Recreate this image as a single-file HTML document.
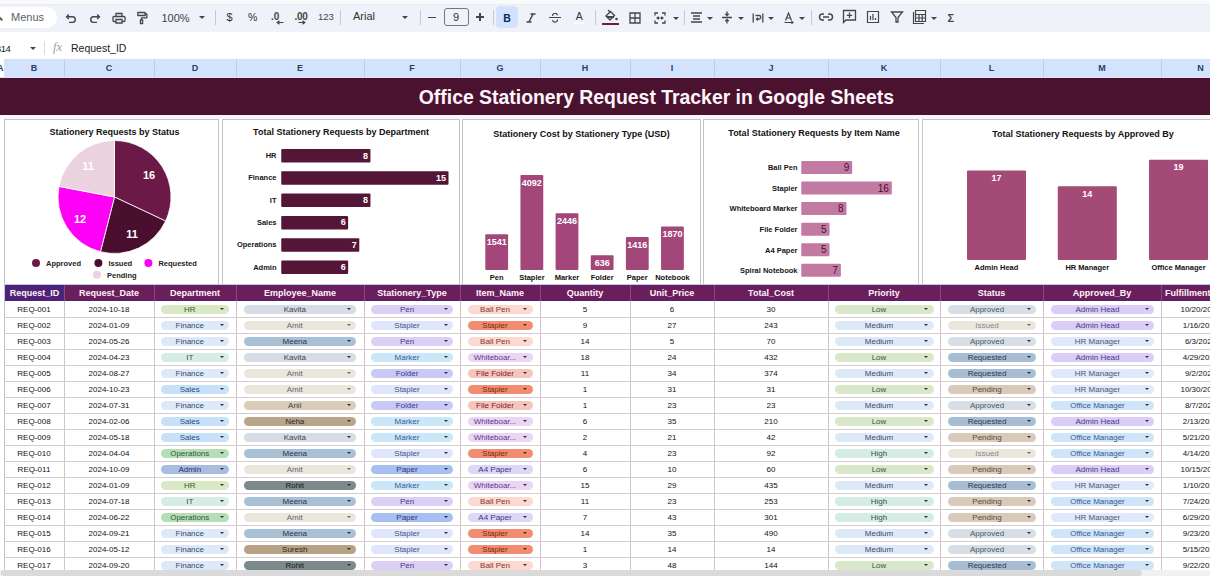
<!DOCTYPE html><html><head><meta charset="utf-8"><style>
*{margin:0;padding:0;box-sizing:border-box}
html,body{width:1210px;height:576px;overflow:hidden;background:#fff;font-family:"Liberation Sans", sans-serif;position:relative}
.ab{position:absolute}
.t{position:absolute;white-space:nowrap;line-height:1}
.chip{position:absolute;height:9.5px;border-radius:4.75px}
.ct{position:absolute;white-space:nowrap;font-size:8px;line-height:10px;text-align:center}
.arr{position:absolute;width:0;height:0;border-left:2.5px solid transparent;border-right:2.5px solid transparent;border-top:3px solid #333}
.arr2{position:absolute;width:0;height:0;border-left:2.2px solid transparent;border-right:2.2px solid transparent;border-top:2.6px solid #333}
</style></head><body>

<div class="ab" style="left:0;top:0;width:1210px;height:4px;background:#f8fafc"></div>
<div class="ab" style="left:0;top:4px;width:1210px;height:28px;background:#eff2f8"></div>
<div class="ab" style="left:0;top:4px;width:1210px;height:1px;background:#e9ecf1"></div>
<div class="ab" style="left:-20px;top:7px;width:77px;height:21px;border-radius:11px;background:#fff"></div>
<div class="t" style="left:11px;top:12px;font-size:11px;color:#5a5d62">Menus</div>
<div class="ab" style="left:-1px;top:18px;width:4px;height:1.5px;background:#555;transform:rotate(45deg)"></div>
<svg class="ab" style="left:65px;top:13px" width="12" height="11" viewBox="0 0 12 11" ><path d="M3.8 1.5 L1.6 3.8 L3.8 6 M1.8 3.8 H7.5 a2.8 2.8 0 0 1 0 5.6 H4" fill="none" stroke="#444746" stroke-width="1.4"/></svg>
<svg class="ab" style="left:89px;top:13px" width="12" height="11" viewBox="0 0 12 11" ><path d="M8.2 1.5 L10.4 3.8 L8.2 6 M10.2 3.8 H4.5 a2.8 2.8 0 0 0 0 5.6 H8" fill="none" stroke="#444746" stroke-width="1.4"/></svg>
<svg class="ab" style="left:112px;top:12px" width="14" height="12" viewBox="0 0 14 12" ><path d="M4 4.5 V1.5 H10 V4.5 M3.5 9.5 H2 a1 1 0 0 1 -1 -1 V5.5 a1 1 0 0 1 1 -1 H12 a1 1 0 0 1 1 1 V8.5 a1 1 0 0 1 -1 1 H10.5 M4 7.5 H10 V11 H4 Z" fill="none" stroke="#444746" stroke-width="1.3"/></svg>
<svg class="ab" style="left:136px;top:11px" width="13" height="14" viewBox="0 0 13 14" ><path d="M1.8 1.5 H9 V4.5 H1.8 Z M9 3 H10.8 V6.8 H5.5 V9 M4.4 9 H6.6 V12.5 H4.4 Z" fill="none" stroke="#444746" stroke-width="1.3" stroke-linejoin="round"/></svg>
<div class="t" style="left:161.5px;top:12.5px;font-size:11px;color:#444">100%</div>
<div class="arr" style="left:199px;top:15.5px;border-top-color:#444746;border-left-width:3px;border-right-width:3px;border-top-width:3.5px"></div>
<div class="ab" style="left:215px;top:10px;width:1px;height:15px;background:#c7c9cc"></div>
<div class="ab" style="left:340px;top:10px;width:1px;height:15px;background:#c7c9cc"></div>
<div class="ab" style="left:420px;top:10px;width:1px;height:15px;background:#c7c9cc"></div>
<div class="ab" style="left:493px;top:10px;width:1px;height:15px;background:#c7c9cc"></div>
<div class="ab" style="left:595px;top:10px;width:1px;height:15px;background:#c7c9cc"></div>
<div class="ab" style="left:684px;top:10px;width:1px;height:15px;background:#c7c9cc"></div>
<div class="ab" style="left:811px;top:10px;width:1px;height:15px;background:#c7c9cc"></div>
<div class="t" style="left:226.5px;top:11.5px;font-size:11px;color:#333">$</div>
<div class="t" style="left:248px;top:12px;font-size:10.5px;color:#333">%</div>
<div class="t" style="left:271px;top:11.5px;font-size:10px;color:#444746;font-weight:bold">.0</div>
<svg class="ab" style="left:276px;top:20px" width="8" height="5" viewBox="0 0 8 5" ><path d="M7.5 2.5 H1.5 M3.5 0.8 L1.2 2.5 L3.5 4.2" fill="none" stroke="#444746" stroke-width="1.2"/></svg>
<div class="t" style="left:294.5px;top:11.5px;font-size:10px;color:#444746;font-weight:bold;letter-spacing:-0.3px">.00</div>
<svg class="ab" style="left:298px;top:20px" width="8" height="5" viewBox="0 0 8 5" ><path d="M0.5 2.5 H6.5 M4.5 0.8 L6.8 2.5 L4.5 4.2" fill="none" stroke="#444746" stroke-width="1.2"/></svg>
<div class="t" style="left:318px;top:12px;font-size:9.5px;color:#444746">123</div>
<div class="t" style="left:353px;top:11px;font-size:11px;color:#333">Arial</div>
<div class="arr" style="left:402px;top:15.5px;border-top-color:#444746;border-left-width:3px;border-right-width:3px;border-top-width:3.5px"></div>
<div class="ab" style="left:428px;top:17px;width:8px;height:1.4px;background:#444746"></div>
<div class="ab" style="left:444px;top:8px;width:25px;height:18px;border:1px solid #747775;border-radius:3px"></div>
<div class="t" style="left:453px;top:12px;font-size:11px;color:#333">9</div>
<div class="ab" style="left:476px;top:16.3px;width:8px;height:1.4px;background:#444746"></div>
<div class="ab" style="left:479.3px;top:13px;width:1.4px;height:8px;background:#444746"></div>
<div class="ab" style="left:496px;top:6px;width:22px;height:22px;border-radius:4px;background:#d3e3fd"></div>
<div class="t" style="left:503.3px;top:13.2px;font-size:10.5px;color:#0b2a5a;font-weight:bold">B</div>
<svg class="ab" style="left:525px;top:13px" width="12" height="10" viewBox="0 0 12 10" ><path d="M5.5 1 H10.5 M1.5 9 H6.5 M8 1 L4 9" fill="none" stroke="#444746" stroke-width="1.5"/></svg>
<svg class="ab" style="left:549px;top:13px" width="12" height="10" viewBox="0 0 12 10" ><path d="M0 4.5 H12 M3.5 3 a2.5 2.2 0 0 1 5 -0.6 M8.5 6.4 a2.5 2.4 0 0 1 -5 0.6" fill="none" stroke="#444746" stroke-width="1.2"/></svg>
<div class="t" style="left:575.8px;top:11px;font-size:10.5px;color:#333">A</div>
<div class="ab" style="left:574px;top:22px;width:11px;height:1.5px;background:#fafbfd"></div>
<svg class="ab" style="left:602px;top:8px" width="18" height="17" viewBox="0 0 18 17" ><path d="M4 8 L8.5 3.5 L12.5 7.5 L8 12 Z" fill="none" stroke="#444746" stroke-width="1.4"/><path d="M5 9 H12" stroke="#444746" stroke-width="2"/><circle cx="14.5" cy="11" r="1.3" fill="#444746"/><path d="M6 2 L8.5 4.5" stroke="#444746" stroke-width="1.3"/></svg>
<div class="ab" style="left:602px;top:22.5px;width:17px;height:2px;background:#6a1e44"></div>
<svg class="ab" style="left:629px;top:12px" width="12" height="12" viewBox="0 0 12 12" ><path d="M1 1 H11 V11 H1 Z M6 1 V11 M1 6 H11" fill="none" stroke="#444746" stroke-width="1.3"/></svg>
<svg class="ab" style="left:654px;top:12px" width="12" height="12" viewBox="0 0 12 12" ><path d="M1 3.5 V1 H4 M1 8.5 V11 H4 M11 3.5 V1 H8 M11 8.5 V11 H8 M2.5 6 H5 M3.8 4.6 L5 6 L3.8 7.4 M9.5 6 H7 M8.2 4.6 L7 6 L8.2 7.4" fill="none" stroke="#444746" stroke-width="1.3"/></svg>
<div class="arr" style="left:672.5px;top:16.5px;border-top-color:#444746;border-left-width:3px;border-right-width:3px;border-top-width:3.5px"></div>
<svg class="ab" style="left:690px;top:11px" width="14" height="13" viewBox="0 0 14 13" ><path d="M1 2 H12 M3 5 H10 M3 8 H10 M1 11 H12" fill="none" stroke="#444746" stroke-width="1.4"/></svg>
<div class="arr" style="left:707px;top:16.5px;border-top-color:#444746;border-left-width:3px;border-right-width:3px;border-top-width:3.5px"></div>
<svg class="ab" style="left:721px;top:11px" width="12" height="13" viewBox="0 0 12 13" ><path d="M1 6.5 H11 M6 0.5 V4.5 M4.3 2.8 L6 4.5 L7.7 2.8 M6 12.5 V8.5 M4.3 10.2 L6 8.5 L7.7 10.2" fill="none" stroke="#444746" stroke-width="1.3"/></svg>
<div class="arr" style="left:737.5px;top:16.5px;border-top-color:#444746;border-left-width:3px;border-right-width:3px;border-top-width:3.5px"></div>
<svg class="ab" style="left:752px;top:12px" width="12" height="12" viewBox="0 0 12 12" ><path d="M1.2 1.5 V10.5 M10.8 1.5 V10.5 M3.5 3.5 H7 a1.8 1.8 0 0 1 0 3.6 H4.8 M6 5.8 L4.5 7.1 L6 8.4" fill="none" stroke="#444746" stroke-width="1.3"/></svg>
<div class="arr" style="left:768px;top:16.5px;border-top-color:#444746;border-left-width:3px;border-right-width:3px;border-top-width:3.5px"></div>
<svg class="ab" style="left:783px;top:12px" width="13" height="12" viewBox="0 0 13 12" ><path d="M2.5 8.5 L5.5 1 L8.5 8.5 M3.6 6 H7.4 M1.5 10.5 H10 M8.5 9.2 L10 10.5 L8.5 11.8" fill="none" stroke="#444746" stroke-width="1.2"/></svg>
<div class="arr" style="left:799px;top:16.5px;border-top-color:#444746;border-left-width:3px;border-right-width:3px;border-top-width:3.5px"></div>
<svg class="ab" style="left:818px;top:11px" width="16" height="12" viewBox="0 0 16 12" ><path d="M6 3 H4.5 a3 3 0 0 0 0 6 H6 M10 3 H11.5 a3 3 0 0 1 0 6 H10 M5 6 H11" fill="none" stroke="#444746" stroke-width="1.4"/></svg>
<svg class="ab" style="left:842px;top:9px" width="15" height="15" viewBox="0 0 15 15" ><path d="M1.5 1.5 H13.5 V11 H4 L1.5 13.5 Z M7.5 3.5 V9 M4.8 6.3 H10.2" fill="none" stroke="#444746" stroke-width="1.3"/></svg>
<svg class="ab" style="left:866px;top:10px" width="14" height="14" viewBox="0 0 14 14" ><path d="M1.5 1.5 H12.5 V12.5 H1.5 Z M4.5 6 V10 M7 4 V10 M9.5 8 V10" fill="none" stroke="#444746" stroke-width="1.2"/></svg>
<svg class="ab" style="left:890px;top:10px" width="14" height="14" viewBox="0 0 14 14" ><path d="M1.5 2 H12.5 L8 7.5 V12 H6 V7.5 Z" fill="none" stroke="#444746" stroke-width="1.3"/></svg>
<svg class="ab" style="left:912px;top:9px" width="15" height="16" viewBox="0 0 15 16" ><path d="M1.5 3 V14.5 H12 M3.5 1.5 H13.5 V12.5 H3.5 Z M3.5 5.5 H13.5 M3.5 9 H13.5 M7 5.5 V12.5 M10.2 5.5 V12.5" fill="none" stroke="#444746" stroke-width="1.2"/></svg>
<div class="arr" style="left:930.5px;top:16.5px;border-top-color:#444746;border-left-width:3px;border-right-width:3px;border-top-width:3.5px"></div>
<div class="t" style="left:947.5px;top:12.5px;font-size:11px;color:#444746;font-weight:bold">&#931;</div>
<div class="ab" style="left:0;top:32px;width:1210px;height:27px;background:#fff"></div>
<div class="t" style="left:-5px;top:44px;font-size:9.5px;letter-spacing:-0.6px;color:#222">B14</div>
<div class="arr" style="left:30px;top:47px;border-top-color:#444746;border-left-width:3px;border-right-width:3px;border-top-width:3.5px"></div>
<div class="ab" style="left:44px;top:41px;width:1px;height:14px;background:#dadce0"></div>
<div class="t" style="left:53px;top:41px;font-size:12.5px;color:#9aa0a6;font-style:italic;font-family:'Liberation Serif',serif">fx</div>
<div class="t" style="left:71px;top:42.5px;font-size:10.5px;color:#222">Request_ID</div>
<div class="ab" style="left:0;top:59px;width:1210px;height:19px;background:#d3e3fd"></div>
<div class="ab" style="left:0;top:59px;width:4px;height:19px;background:#fff"></div>
<div class="t" style="left:-3px;top:64px;font-size:9px;font-weight:bold;color:#1f3b63">A</div>
<div class="ab" style="left:64px;top:59px;width:1px;height:19px;background:#c0cbe0"></div>
<div class="t" style="left:14.0px;width:40px;text-align:center;top:64px;font-size:9px;font-weight:bold;color:#2a3f5e">B</div>
<div class="ab" style="left:154px;top:59px;width:1px;height:19px;background:#c0cbe0"></div>
<div class="t" style="left:89.0px;width:40px;text-align:center;top:64px;font-size:9px;font-weight:bold;color:#2a3f5e">C</div>
<div class="ab" style="left:236px;top:59px;width:1px;height:19px;background:#c0cbe0"></div>
<div class="t" style="left:175.0px;width:40px;text-align:center;top:64px;font-size:9px;font-weight:bold;color:#2a3f5e">D</div>
<div class="ab" style="left:364px;top:59px;width:1px;height:19px;background:#c0cbe0"></div>
<div class="t" style="left:280.0px;width:40px;text-align:center;top:64px;font-size:9px;font-weight:bold;color:#2a3f5e">E</div>
<div class="ab" style="left:460px;top:59px;width:1px;height:19px;background:#c0cbe0"></div>
<div class="t" style="left:392.0px;width:40px;text-align:center;top:64px;font-size:9px;font-weight:bold;color:#2a3f5e">F</div>
<div class="ab" style="left:540px;top:59px;width:1px;height:19px;background:#c0cbe0"></div>
<div class="t" style="left:480.0px;width:40px;text-align:center;top:64px;font-size:9px;font-weight:bold;color:#2a3f5e">G</div>
<div class="ab" style="left:630px;top:59px;width:1px;height:19px;background:#c0cbe0"></div>
<div class="t" style="left:565.0px;width:40px;text-align:center;top:64px;font-size:9px;font-weight:bold;color:#2a3f5e">H</div>
<div class="ab" style="left:714px;top:59px;width:1px;height:19px;background:#c0cbe0"></div>
<div class="t" style="left:652.0px;width:40px;text-align:center;top:64px;font-size:9px;font-weight:bold;color:#2a3f5e">I</div>
<div class="ab" style="left:828px;top:59px;width:1px;height:19px;background:#c0cbe0"></div>
<div class="t" style="left:751.0px;width:40px;text-align:center;top:64px;font-size:9px;font-weight:bold;color:#2a3f5e">J</div>
<div class="ab" style="left:940px;top:59px;width:1px;height:19px;background:#c0cbe0"></div>
<div class="t" style="left:864.0px;width:40px;text-align:center;top:64px;font-size:9px;font-weight:bold;color:#2a3f5e">K</div>
<div class="ab" style="left:1043px;top:59px;width:1px;height:19px;background:#c0cbe0"></div>
<div class="t" style="left:971.5px;width:40px;text-align:center;top:64px;font-size:9px;font-weight:bold;color:#2a3f5e">L</div>
<div class="ab" style="left:1161px;top:59px;width:1px;height:19px;background:#c0cbe0"></div>
<div class="t" style="left:1082.0px;width:40px;text-align:center;top:64px;font-size:9px;font-weight:bold;color:#2a3f5e">M</div>
<div class="ab" style="left:1240px;top:59px;width:1px;height:19px;background:#c0cbe0"></div>
<div class="t" style="left:1180.5px;width:40px;text-align:center;top:64px;font-size:9px;font-weight:bold;color:#2a3f5e">N</div>
<div class="ab" style="left:0;top:77px;width:1210px;height:1px;background:#e8e0ee"></div>
<div class="ab" style="left:0;top:78px;width:1210px;height:37px;background:#4b1230"></div>
<div class="ab" style="left:0;top:115px;width:1210px;height:4px;background:#fdf5fa"></div>
<div class="t" style="left:356.4px;width:600px;text-align:center;top:88px;font-size:19.4px;font-weight:bold;color:#fff6fb">Office Stationery Request Tracker in Google Sheets</div>
<div class="ab" style="left:0;top:119px;width:1210px;height:166px;background:#fff"></div>
<div class="ab" style="left:4.0px;top:119px;width:215.0px;height:170px;border:1px solid #c4c4c4"></div>
<div class="ab" style="left:222.0px;top:119px;width:238.0px;height:170px;border:1px solid #c4c4c4"></div>
<div class="ab" style="left:462.0px;top:119px;width:239.0px;height:170px;border:1px solid #c4c4c4"></div>
<div class="ab" style="left:703.0px;top:119px;width:216.0px;height:170px;border:1px solid #c4c4c4"></div>
<div class="ab" style="left:922.0px;top:119px;width:338.5px;height:170px;border:1px solid #c4c4c4"></div>
<svg class="ab" style="left:0;top:0" width="1210" height="576" viewBox="0 0 1210 576" font-family='"Liberation Sans", sans-serif'><text x="114.5" y="134.5" font-size="9" font-weight="bold" fill="#111" text-anchor="middle">Stationery Requests by Status</text><path d="M114.5 197 L114.50 140.50 A56.5 56.5 0 0 1 165.62 221.06 Z" fill="#6b1a48" stroke="#fff" stroke-width="0.8"/><path d="M114.5 197 L165.62 221.06 A56.5 56.5 0 0 1 100.45 251.72 Z" fill="#4a0f2e" stroke="#fff" stroke-width="0.8"/><path d="M114.5 197 L100.45 251.72 A56.5 56.5 0 0 1 59.00 186.41 Z" fill="#ff00f6" stroke="#fff" stroke-width="0.8"/><path d="M114.5 197 L59.00 186.41 A56.5 56.5 0 0 1 114.50 140.50 Z" fill="#ead2de" stroke="#fff" stroke-width="0.8"/><text x="149" y="179" font-size="11" font-weight="bold" fill="#fff" text-anchor="middle">16</text><text x="132" y="238" font-size="11" font-weight="bold" fill="#fff" text-anchor="middle">11</text><text x="80" y="223" font-size="11" font-weight="bold" fill="#fff" text-anchor="middle">12</text><text x="88" y="169.5" font-size="11" font-weight="bold" fill="#fff" text-anchor="middle">11</text><circle cx="36" cy="263" r="4" fill="#6b1a48"/><text x="46" y="265.8" font-size="7.5" font-weight="bold" fill="#222" text-anchor="start">Approved</text><circle cx="98.4" cy="263" r="4" fill="#4a0f2e"/><text x="108.4" y="265.8" font-size="7.5" font-weight="bold" fill="#222" text-anchor="start">Issued</text><circle cx="148.4" cy="263" r="4" fill="#ff00f6"/><text x="158.4" y="265.8" font-size="7.5" font-weight="bold" fill="#222" text-anchor="start">Requested</text><circle cx="97" cy="274.7" r="4" fill="#ead2de"/><text x="107" y="277.5" font-size="7.5" font-weight="bold" fill="#222" text-anchor="start">Pending</text><text x="341" y="135" font-size="9" font-weight="bold" fill="#111" text-anchor="middle">Total Stationery Requests by Department</text><rect x="281.25" y="149.00" width="89.20" height="13.5" rx="1" fill="#541636"/><text x="276.5" y="158.0" font-size="7.5" font-weight="bold" fill="#151515" text-anchor="end">HR</text><text x="367.95" y="158.5" font-size="9" font-weight="bold" fill="#fff" text-anchor="end">8</text><rect x="281.25" y="171.30" width="167.25" height="13.5" rx="1" fill="#541636"/><text x="276.5" y="180.3" font-size="7.5" font-weight="bold" fill="#151515" text-anchor="end">Finance</text><text x="446.0" y="180.8" font-size="9" font-weight="bold" fill="#fff" text-anchor="end">15</text><rect x="281.25" y="193.60" width="89.20" height="13.5" rx="1" fill="#541636"/><text x="276.5" y="202.6" font-size="7.5" font-weight="bold" fill="#151515" text-anchor="end">IT</text><text x="367.95" y="203.1" font-size="9" font-weight="bold" fill="#fff" text-anchor="end">8</text><rect x="281.25" y="215.90" width="66.90" height="13.5" rx="1" fill="#541636"/><text x="276.5" y="224.9" font-size="7.5" font-weight="bold" fill="#151515" text-anchor="end">Sales</text><text x="345.65" y="225.4" font-size="9" font-weight="bold" fill="#fff" text-anchor="end">6</text><rect x="281.25" y="238.20" width="78.05" height="13.5" rx="1" fill="#541636"/><text x="276.5" y="247.2" font-size="7.5" font-weight="bold" fill="#151515" text-anchor="end">Operations</text><text x="356.8" y="247.7" font-size="9" font-weight="bold" fill="#fff" text-anchor="end">7</text><rect x="281.25" y="260.50" width="66.90" height="13.5" rx="1" fill="#541636"/><text x="276.5" y="269.5" font-size="7.5" font-weight="bold" fill="#151515" text-anchor="end">Admin</text><text x="345.65" y="270.0" font-size="9" font-weight="bold" fill="#fff" text-anchor="end">6</text><text x="581.5" y="136.5" font-size="9" font-weight="bold" fill="#111" text-anchor="middle">Stationery Cost by Stationery Type (USD)</text><rect x="485.30" y="234.22" width="22.8" height="35.78" rx="1" fill="#a3477a"/><text x="496.7" y="244.81798" font-size="9" font-weight="bold" fill="#fff" text-anchor="middle">1541</text><text x="496.7" y="280" font-size="7.5" font-weight="bold" fill="#111" text-anchor="middle">Pen</text><rect x="520.45" y="174.98" width="22.8" height="95.02" rx="1" fill="#a3477a"/><text x="531.85" y="185.58375999999998" font-size="9" font-weight="bold" fill="#fff" text-anchor="middle">4092</text><text x="531.85" y="280" font-size="7.5" font-weight="bold" fill="#111" text-anchor="middle">Stapler</text><rect x="555.60" y="213.20" width="22.8" height="56.80" rx="1" fill="#a3477a"/><text x="567.0" y="223.80388" font-size="9" font-weight="bold" fill="#fff" text-anchor="middle">2446</text><text x="567.0" y="280" font-size="7.5" font-weight="bold" fill="#111" text-anchor="middle">Marker</text><rect x="590.75" y="255.23" width="22.8" height="14.77" rx="1" fill="#a3477a"/><text x="602.15" y="265.83208" font-size="9" font-weight="bold" fill="#fff" text-anchor="middle">636</text><text x="602.15" y="280" font-size="7.5" font-weight="bold" fill="#111" text-anchor="middle">Folder</text><rect x="625.90" y="237.12" width="22.8" height="32.88" rx="1" fill="#a3477a"/><text x="637.3" y="247.72047999999998" font-size="9" font-weight="bold" fill="#fff" text-anchor="middle">1416</text><text x="637.3" y="280" font-size="7.5" font-weight="bold" fill="#111" text-anchor="middle">Paper</text><rect x="661.05" y="226.58" width="22.8" height="43.42" rx="1" fill="#a3477a"/><text x="672.4499999999999" y="237.1786" font-size="9" font-weight="bold" fill="#fff" text-anchor="middle">1870</text><text x="672.4499999999999" y="280" font-size="7.5" font-weight="bold" fill="#111" text-anchor="middle">Notebook</text><text x="814" y="135.5" font-size="9" font-weight="bold" fill="#111" text-anchor="middle">Total Stationery Requests by Item Name</text><rect x="801.25" y="161.00" width="50.94" height="13" rx="1" fill="#c27aa2"/><text x="797.5" y="170.3" font-size="7.5" font-weight="bold" fill="#151515" text-anchor="end">Ball Pen</text><text x="849.19" y="171.0" font-size="10" font-weight="normal" fill="#4a0f2e" text-anchor="end">9</text><rect x="801.25" y="181.55" width="90.56" height="13" rx="1" fill="#c27aa2"/><text x="797.5" y="190.85000000000002" font-size="7.5" font-weight="bold" fill="#151515" text-anchor="end">Stapler</text><text x="888.81" y="191.55" font-size="10" font-weight="normal" fill="#4a0f2e" text-anchor="end">16</text><rect x="801.25" y="202.10" width="45.28" height="13" rx="1" fill="#c27aa2"/><text x="797.5" y="211.4" font-size="7.5" font-weight="bold" fill="#151515" text-anchor="end">Whiteboard Marker</text><text x="843.53" y="212.1" font-size="10" font-weight="normal" fill="#4a0f2e" text-anchor="end">8</text><rect x="801.25" y="222.65" width="28.30" height="13" rx="1" fill="#c27aa2"/><text x="797.5" y="231.95000000000002" font-size="7.5" font-weight="bold" fill="#151515" text-anchor="end">File Folder</text><text x="826.55" y="232.65" font-size="10" font-weight="normal" fill="#4a0f2e" text-anchor="end">5</text><rect x="801.25" y="243.20" width="28.30" height="13" rx="1" fill="#c27aa2"/><text x="797.5" y="252.5" font-size="7.5" font-weight="bold" fill="#151515" text-anchor="end">A4 Paper</text><text x="826.55" y="253.2" font-size="10" font-weight="normal" fill="#4a0f2e" text-anchor="end">5</text><rect x="801.25" y="263.75" width="39.62" height="13" rx="1" fill="#c27aa2"/><text x="797.5" y="273.05" font-size="7.5" font-weight="bold" fill="#151515" text-anchor="end">Spiral Notebook</text><text x="837.87" y="273.75" font-size="10" font-weight="normal" fill="#4a0f2e" text-anchor="end">7</text><text x="1083" y="136.5" font-size="9" font-weight="bold" fill="#111" text-anchor="middle">Total Stationery Requests by Approved By</text><rect x="967" y="170.41" width="59" height="89.59" rx="1" fill="#a34a76"/><text x="996.5" y="181.01000000000002" font-size="9" font-weight="bold" fill="#fff" text-anchor="middle">17</text><text x="996.5" y="270" font-size="7.5" font-weight="bold" fill="#111" text-anchor="middle">Admin Head</text><rect x="1057.8" y="186.22" width="59" height="73.78" rx="1" fill="#a34a76"/><text x="1087.3" y="196.82" font-size="9" font-weight="bold" fill="#fff" text-anchor="middle">14</text><text x="1087.3" y="270" font-size="7.5" font-weight="bold" fill="#111" text-anchor="middle">HR Manager</text><rect x="1149" y="159.87" width="59" height="100.13" rx="1" fill="#a34a76"/><text x="1178.5" y="170.47" font-size="9" font-weight="bold" fill="#fff" text-anchor="middle">19</text><text x="1178.5" y="270" font-size="7.5" font-weight="bold" fill="#111" text-anchor="middle">Office Manager</text></svg>
<div class="ab" style="left:0;top:285px;width:1210px;height:291px;background:#fff"></div>
<div class="ab" style="left:4px;top:285px;width:1206px;height:16px;background:#6b1e5c"></div>
<div class="ab" style="left:4px;top:284px;width:1206px;height:1px;background:#b4caf2"></div>
<div class="ab" style="left:4px;top:300px;width:1206px;height:1px;background:#4a2372"></div>
<div class="t" style="left:-26.0px;width:120px;text-align:center;top:288.5px;font-size:9px;font-weight:bold;color:#fff3fb">Request_ID</div>
<div class="ab" style="left:64px;top:285px;width:1px;height:16px;background:#8a4a7c"></div>
<div class="t" style="left:49.0px;width:120px;text-align:center;top:288.5px;font-size:9px;font-weight:bold;color:#fff3fb">Request_Date</div>
<div class="ab" style="left:154px;top:285px;width:1px;height:16px;background:#8a4a7c"></div>
<div class="t" style="left:135.0px;width:120px;text-align:center;top:288.5px;font-size:9px;font-weight:bold;color:#fff3fb">Department</div>
<div class="ab" style="left:236px;top:285px;width:1px;height:16px;background:#8a4a7c"></div>
<div class="t" style="left:240.0px;width:120px;text-align:center;top:288.5px;font-size:9px;font-weight:bold;color:#fff3fb">Employee_Name</div>
<div class="ab" style="left:364px;top:285px;width:1px;height:16px;background:#8a4a7c"></div>
<div class="t" style="left:352.0px;width:120px;text-align:center;top:288.5px;font-size:9px;font-weight:bold;color:#fff3fb">Stationery_Type</div>
<div class="ab" style="left:460px;top:285px;width:1px;height:16px;background:#8a4a7c"></div>
<div class="t" style="left:440.0px;width:120px;text-align:center;top:288.5px;font-size:9px;font-weight:bold;color:#fff3fb">Item_Name</div>
<div class="ab" style="left:540px;top:285px;width:1px;height:16px;background:#8a4a7c"></div>
<div class="t" style="left:525.0px;width:120px;text-align:center;top:288.5px;font-size:9px;font-weight:bold;color:#fff3fb">Quantity</div>
<div class="ab" style="left:630px;top:285px;width:1px;height:16px;background:#8a4a7c"></div>
<div class="t" style="left:612.0px;width:120px;text-align:center;top:288.5px;font-size:9px;font-weight:bold;color:#fff3fb">Unit_Price</div>
<div class="ab" style="left:714px;top:285px;width:1px;height:16px;background:#8a4a7c"></div>
<div class="t" style="left:711.0px;width:120px;text-align:center;top:288.5px;font-size:9px;font-weight:bold;color:#fff3fb">Total_Cost</div>
<div class="ab" style="left:828px;top:285px;width:1px;height:16px;background:#8a4a7c"></div>
<div class="t" style="left:824.0px;width:120px;text-align:center;top:288.5px;font-size:9px;font-weight:bold;color:#fff3fb">Priority</div>
<div class="ab" style="left:940px;top:285px;width:1px;height:16px;background:#8a4a7c"></div>
<div class="t" style="left:931.5px;width:120px;text-align:center;top:288.5px;font-size:9px;font-weight:bold;color:#fff3fb">Status</div>
<div class="ab" style="left:1043px;top:285px;width:1px;height:16px;background:#8a4a7c"></div>
<div class="t" style="left:1042.0px;width:120px;text-align:center;top:288.5px;font-size:9px;font-weight:bold;color:#fff3fb">Approved_By</div>
<div class="ab" style="left:1161px;top:285px;width:1px;height:16px;background:#8a4a7c"></div>
<div class="t" style="left:1165px;top:288.5px;font-size:9px;font-weight:bold;color:#fff3fb">Fulfillment_Date</div>
<div class="ab" style="left:1240px;top:285px;width:1px;height:16px;background:#8a4a7c"></div>
<div class="ab" style="left:4px;top:317px;width:1206px;height:1px;background:#d3cdd2"></div>
<div class="ab" style="left:4px;top:333px;width:1206px;height:1px;background:#d3cdd2"></div>
<div class="ab" style="left:4px;top:349px;width:1206px;height:1px;background:#d3cdd2"></div>
<div class="ab" style="left:4px;top:365px;width:1206px;height:1px;background:#d3cdd2"></div>
<div class="ab" style="left:4px;top:381px;width:1206px;height:1px;background:#d3cdd2"></div>
<div class="ab" style="left:4px;top:397px;width:1206px;height:1px;background:#d3cdd2"></div>
<div class="ab" style="left:4px;top:413px;width:1206px;height:1px;background:#d3cdd2"></div>
<div class="ab" style="left:4px;top:429px;width:1206px;height:1px;background:#d3cdd2"></div>
<div class="ab" style="left:4px;top:445px;width:1206px;height:1px;background:#d3cdd2"></div>
<div class="ab" style="left:4px;top:461px;width:1206px;height:1px;background:#d3cdd2"></div>
<div class="ab" style="left:4px;top:477px;width:1206px;height:1px;background:#d3cdd2"></div>
<div class="ab" style="left:4px;top:493px;width:1206px;height:1px;background:#d3cdd2"></div>
<div class="ab" style="left:4px;top:509px;width:1206px;height:1px;background:#d3cdd2"></div>
<div class="ab" style="left:4px;top:525px;width:1206px;height:1px;background:#d3cdd2"></div>
<div class="ab" style="left:4px;top:541px;width:1206px;height:1px;background:#d3cdd2"></div>
<div class="ab" style="left:4px;top:557px;width:1206px;height:1px;background:#d3cdd2"></div>
<div class="ab" style="left:4px;top:573px;width:1206px;height:1px;background:#d3cdd2"></div>
<div class="ab" style="left:4px;top:589px;width:1206px;height:1px;background:#d3cdd2"></div>
<div class="ab" style="left:4px;top:285px;width:1px;height:291px;background:#c6c6ca"></div>
<div class="ab" style="left:64px;top:301px;width:1px;height:276px;background:#d6c2cd"></div>
<div class="ab" style="left:154px;top:301px;width:1px;height:276px;background:#d6c2cd"></div>
<div class="ab" style="left:236px;top:301px;width:1px;height:276px;background:#d6c2cd"></div>
<div class="ab" style="left:364px;top:301px;width:1px;height:276px;background:#d6c2cd"></div>
<div class="ab" style="left:460px;top:301px;width:1px;height:276px;background:#d6c2cd"></div>
<div class="ab" style="left:540px;top:301px;width:1px;height:276px;background:#d6c2cd"></div>
<div class="ab" style="left:630px;top:301px;width:1px;height:276px;background:#d6c2cd"></div>
<div class="ab" style="left:714px;top:301px;width:1px;height:276px;background:#d6c2cd"></div>
<div class="ab" style="left:828px;top:301px;width:1px;height:276px;background:#d6c2cd"></div>
<div class="ab" style="left:940px;top:301px;width:1px;height:276px;background:#d6c2cd"></div>
<div class="ab" style="left:1043px;top:301px;width:1px;height:276px;background:#d6c2cd"></div>
<div class="ab" style="left:1161px;top:301px;width:1px;height:276px;background:#d6c2cd"></div>
<div class="ab" style="left:1240px;top:301px;width:1px;height:276px;background:#d6c2cd"></div>
<div class="ab" style="left:5px;top:285px;width:59px;height:16px;background:#4f2275;border-left:1px solid #3a2f8f;border-right:1px solid #3a2f8f"></div>
<div class="t" style="left:4px;width:61px;text-align:center;top:288.5px;font-size:9px;font-weight:bold;color:#fff3fb">Request_ID</div>
<div class="t" style="left:-6.0px;width:80px;text-align:center;top:305.5px;font-size:8px;color:#111">REQ-001</div>
<div class="t" style="left:69.0px;width:80px;text-align:center;top:305.5px;font-size:8px;color:#111">2024-10-18</div>
<div class="chip" style="left:160.5px;top:304.7px;width:68.5px;background:#d9e9c6"></div>
<div class="ct" style="left:149.75px;width:80px;top:304.5px;color:#3d5a2a">HR</div>
<div class="arr2" style="left:219.8px;top:308.3px;border-top-color:#2a2f3a"></div>
<div class="chip" style="left:243.5px;top:304.7px;width:112.5px;background:#d5dce5"></div>
<div class="ct" style="left:254.75px;width:80px;top:304.5px;color:#444">Kavita</div>
<div class="arr2" style="left:346.8px;top:308.3px;border-top-color:#2a2f3a"></div>
<div class="chip" style="left:371px;top:304.7px;width:82px;background:#dccff6"></div>
<div class="ct" style="left:367.0px;width:80px;top:304.5px;color:#4a3a7a">Pen</div>
<div class="arr2" style="left:443.8px;top:308.3px;border-top-color:#2a2f3a"></div>
<div class="chip" style="left:467.5px;top:304.7px;width:65.0px;background:#fbd9cf"></div>
<div class="ct" style="left:455.0px;width:80px;top:304.5px;color:#7a3a30">Ball Pen</div>
<div class="arr2" style="left:523.3px;top:308.3px;border-top-color:#2a2f3a"></div>
<div class="t" style="left:545.0px;width:80px;text-align:center;top:305.5px;font-size:8px;color:#111">5</div>
<div class="t" style="left:632.0px;width:80px;text-align:center;top:305.5px;font-size:8px;color:#111">6</div>
<div class="t" style="left:731.0px;width:80px;text-align:center;top:305.5px;font-size:8px;color:#111">30</div>
<div class="chip" style="left:834.5px;top:304.7px;width:99.0px;background:#d8e8c8"></div>
<div class="ct" style="left:839.0px;width:80px;top:304.5px;color:#3a5a2a">Low</div>
<div class="arr2" style="left:924.3px;top:308.3px;border-top-color:#2a2f3a"></div>
<div class="chip" style="left:948px;top:304.7px;width:88px;background:#d8dee6"></div>
<div class="ct" style="left:947.0px;width:80px;top:304.5px;color:#4a5a6a">Approved</div>
<div class="arr2" style="left:1026.8px;top:308.3px;border-top-color:#2a2f3a"></div>
<div class="chip" style="left:1051px;top:304.7px;width:103px;background:#dccdf7"></div>
<div class="ct" style="left:1057.5px;width:80px;top:304.5px;color:#4a3a7a">Admin Head</div>
<div class="arr2" style="left:1144.8px;top:308.3px;border-top-color:#2a2f3a"></div>
<div class="t" style="left:1160.5px;width:80px;text-align:center;top:305.5px;font-size:8px;color:#111">10/20/2024</div>
<div class="t" style="left:-6.0px;width:80px;text-align:center;top:321.5px;font-size:8px;color:#111">REQ-002</div>
<div class="t" style="left:69.0px;width:80px;text-align:center;top:321.5px;font-size:8px;color:#111">2024-01-09</div>
<div class="chip" style="left:160.5px;top:320.7px;width:68.5px;background:#dde9f8"></div>
<div class="ct" style="left:149.75px;width:80px;top:320.5px;color:#3a4d6a">Finance</div>
<div class="arr2" style="left:219.8px;top:324.3px;border-top-color:#2a2f3a"></div>
<div class="chip" style="left:243.5px;top:320.7px;width:112.5px;background:#e9e6dd"></div>
<div class="ct" style="left:254.75px;width:80px;top:320.5px;color:#6a6a6a">Amit</div>
<div class="arr2" style="left:346.8px;top:324.3px;border-top-color:#666"></div>
<div class="chip" style="left:371px;top:320.7px;width:82px;background:#dfe6fb"></div>
<div class="ct" style="left:367.0px;width:80px;top:320.5px;color:#4a5480">Stapler</div>
<div class="arr2" style="left:443.8px;top:324.3px;border-top-color:#2a2f3a"></div>
<div class="chip" style="left:467.5px;top:320.7px;width:65.0px;background:#f38d70"></div>
<div class="ct" style="left:455.0px;width:80px;top:320.5px;color:#6a2a1a">Stapler</div>
<div class="arr2" style="left:523.3px;top:324.3px;border-top-color:#2a2f3a"></div>
<div class="t" style="left:545.0px;width:80px;text-align:center;top:321.5px;font-size:8px;color:#111">9</div>
<div class="t" style="left:632.0px;width:80px;text-align:center;top:321.5px;font-size:8px;color:#111">27</div>
<div class="t" style="left:731.0px;width:80px;text-align:center;top:321.5px;font-size:8px;color:#111">243</div>
<div class="chip" style="left:834.5px;top:320.7px;width:99.0px;background:#dde9f8"></div>
<div class="ct" style="left:839.0px;width:80px;top:320.5px;color:#3a4a6a">Medium</div>
<div class="arr2" style="left:924.3px;top:324.3px;border-top-color:#2a2f3a"></div>
<div class="chip" style="left:948px;top:320.7px;width:88px;background:#ebe7dd"></div>
<div class="ct" style="left:947.0px;width:80px;top:320.5px;color:#888">Issued</div>
<div class="arr2" style="left:1026.8px;top:324.3px;border-top-color:#666"></div>
<div class="chip" style="left:1051px;top:320.7px;width:103px;background:#dccdf7"></div>
<div class="ct" style="left:1057.5px;width:80px;top:320.5px;color:#4a3a7a">Admin Head</div>
<div class="arr2" style="left:1144.8px;top:324.3px;border-top-color:#2a2f3a"></div>
<div class="t" style="left:1160.5px;width:80px;text-align:center;top:321.5px;font-size:8px;color:#111">1/16/2024</div>
<div class="t" style="left:-6.0px;width:80px;text-align:center;top:337.5px;font-size:8px;color:#111">REQ-003</div>
<div class="t" style="left:69.0px;width:80px;text-align:center;top:337.5px;font-size:8px;color:#111">2024-05-26</div>
<div class="chip" style="left:160.5px;top:336.7px;width:68.5px;background:#dde9f8"></div>
<div class="ct" style="left:149.75px;width:80px;top:336.5px;color:#3a4d6a">Finance</div>
<div class="arr2" style="left:219.8px;top:340.3px;border-top-color:#2a2f3a"></div>
<div class="chip" style="left:243.5px;top:336.7px;width:112.5px;background:#a8c1d7"></div>
<div class="ct" style="left:254.75px;width:80px;top:336.5px;color:#2a3444">Meena</div>
<div class="arr2" style="left:346.8px;top:340.3px;border-top-color:#2a2f3a"></div>
<div class="chip" style="left:371px;top:336.7px;width:82px;background:#dccff6"></div>
<div class="ct" style="left:367.0px;width:80px;top:336.5px;color:#4a3a7a">Pen</div>
<div class="arr2" style="left:443.8px;top:340.3px;border-top-color:#2a2f3a"></div>
<div class="chip" style="left:467.5px;top:336.7px;width:65.0px;background:#fbd9cf"></div>
<div class="ct" style="left:455.0px;width:80px;top:336.5px;color:#7a3a30">Ball Pen</div>
<div class="arr2" style="left:523.3px;top:340.3px;border-top-color:#2a2f3a"></div>
<div class="t" style="left:545.0px;width:80px;text-align:center;top:337.5px;font-size:8px;color:#111">14</div>
<div class="t" style="left:632.0px;width:80px;text-align:center;top:337.5px;font-size:8px;color:#111">5</div>
<div class="t" style="left:731.0px;width:80px;text-align:center;top:337.5px;font-size:8px;color:#111">70</div>
<div class="chip" style="left:834.5px;top:336.7px;width:99.0px;background:#dde9f8"></div>
<div class="ct" style="left:839.0px;width:80px;top:336.5px;color:#3a4a6a">Medium</div>
<div class="arr2" style="left:924.3px;top:340.3px;border-top-color:#2a2f3a"></div>
<div class="chip" style="left:948px;top:336.7px;width:88px;background:#d8dee6"></div>
<div class="ct" style="left:947.0px;width:80px;top:336.5px;color:#4a5a6a">Approved</div>
<div class="arr2" style="left:1026.8px;top:340.3px;border-top-color:#2a2f3a"></div>
<div class="chip" style="left:1051px;top:336.7px;width:103px;background:#e0e8fb"></div>
<div class="ct" style="left:1057.5px;width:80px;top:336.5px;color:#4a5a7a">HR Manager</div>
<div class="arr2" style="left:1144.8px;top:340.3px;border-top-color:#2a2f3a"></div>
<div class="t" style="left:1160.5px;width:80px;text-align:center;top:337.5px;font-size:8px;color:#111">6/3/2024</div>
<div class="t" style="left:-6.0px;width:80px;text-align:center;top:353.5px;font-size:8px;color:#111">REQ-004</div>
<div class="t" style="left:69.0px;width:80px;text-align:center;top:353.5px;font-size:8px;color:#111">2024-04-23</div>
<div class="chip" style="left:160.5px;top:352.7px;width:68.5px;background:#d6ede5"></div>
<div class="ct" style="left:149.75px;width:80px;top:352.5px;color:#2f4f48">IT</div>
<div class="arr2" style="left:219.8px;top:356.3px;border-top-color:#2a2f3a"></div>
<div class="chip" style="left:243.5px;top:352.7px;width:112.5px;background:#d5dce5"></div>
<div class="ct" style="left:254.75px;width:80px;top:352.5px;color:#444">Kavita</div>
<div class="arr2" style="left:346.8px;top:356.3px;border-top-color:#2a2f3a"></div>
<div class="chip" style="left:371px;top:352.7px;width:82px;background:#cce6f9"></div>
<div class="ct" style="left:367.0px;width:80px;top:352.5px;color:#3a5a8a">Marker</div>
<div class="arr2" style="left:443.8px;top:356.3px;border-top-color:#2a2f3a"></div>
<div class="chip" style="left:467.5px;top:352.7px;width:65.0px;background:#ead6f4"></div>
<div class="ct" style="left:455.0px;width:80px;top:352.5px;color:#5a3a7a">Whiteboar...</div>
<div class="arr2" style="left:523.3px;top:356.3px;border-top-color:#2a2f3a"></div>
<div class="t" style="left:545.0px;width:80px;text-align:center;top:353.5px;font-size:8px;color:#111">18</div>
<div class="t" style="left:632.0px;width:80px;text-align:center;top:353.5px;font-size:8px;color:#111">24</div>
<div class="t" style="left:731.0px;width:80px;text-align:center;top:353.5px;font-size:8px;color:#111">432</div>
<div class="chip" style="left:834.5px;top:352.7px;width:99.0px;background:#d8e8c8"></div>
<div class="ct" style="left:839.0px;width:80px;top:352.5px;color:#3a5a2a">Low</div>
<div class="arr2" style="left:924.3px;top:356.3px;border-top-color:#2a2f3a"></div>
<div class="chip" style="left:948px;top:352.7px;width:88px;background:#a6bdd3"></div>
<div class="ct" style="left:947.0px;width:80px;top:352.5px;color:#2a3a4a">Requested</div>
<div class="arr2" style="left:1026.8px;top:356.3px;border-top-color:#2a2f3a"></div>
<div class="chip" style="left:1051px;top:352.7px;width:103px;background:#dccdf7"></div>
<div class="ct" style="left:1057.5px;width:80px;top:352.5px;color:#4a3a7a">Admin Head</div>
<div class="arr2" style="left:1144.8px;top:356.3px;border-top-color:#2a2f3a"></div>
<div class="t" style="left:1160.5px;width:80px;text-align:center;top:353.5px;font-size:8px;color:#111">4/29/2024</div>
<div class="t" style="left:-6.0px;width:80px;text-align:center;top:369.5px;font-size:8px;color:#111">REQ-005</div>
<div class="t" style="left:69.0px;width:80px;text-align:center;top:369.5px;font-size:8px;color:#111">2024-08-27</div>
<div class="chip" style="left:160.5px;top:368.7px;width:68.5px;background:#dde9f8"></div>
<div class="ct" style="left:149.75px;width:80px;top:368.5px;color:#3a4d6a">Finance</div>
<div class="arr2" style="left:219.8px;top:372.3px;border-top-color:#2a2f3a"></div>
<div class="chip" style="left:243.5px;top:368.7px;width:112.5px;background:#e9e6dd"></div>
<div class="ct" style="left:254.75px;width:80px;top:368.5px;color:#6a6a6a">Amit</div>
<div class="arr2" style="left:346.8px;top:372.3px;border-top-color:#666"></div>
<div class="chip" style="left:371px;top:368.7px;width:82px;background:#c9c9f5"></div>
<div class="ct" style="left:367.0px;width:80px;top:368.5px;color:#3a3a8a">Folder</div>
<div class="arr2" style="left:443.8px;top:372.3px;border-top-color:#2a2f3a"></div>
<div class="chip" style="left:467.5px;top:368.7px;width:65.0px;background:#f8c5bd"></div>
<div class="ct" style="left:455.0px;width:80px;top:368.5px;color:#6a2a2a">File Folder</div>
<div class="arr2" style="left:523.3px;top:372.3px;border-top-color:#2a2f3a"></div>
<div class="t" style="left:545.0px;width:80px;text-align:center;top:369.5px;font-size:8px;color:#111">11</div>
<div class="t" style="left:632.0px;width:80px;text-align:center;top:369.5px;font-size:8px;color:#111">34</div>
<div class="t" style="left:731.0px;width:80px;text-align:center;top:369.5px;font-size:8px;color:#111">374</div>
<div class="chip" style="left:834.5px;top:368.7px;width:99.0px;background:#dde9f8"></div>
<div class="ct" style="left:839.0px;width:80px;top:368.5px;color:#3a4a6a">Medium</div>
<div class="arr2" style="left:924.3px;top:372.3px;border-top-color:#2a2f3a"></div>
<div class="chip" style="left:948px;top:368.7px;width:88px;background:#a6bdd3"></div>
<div class="ct" style="left:947.0px;width:80px;top:368.5px;color:#2a3a4a">Requested</div>
<div class="arr2" style="left:1026.8px;top:372.3px;border-top-color:#2a2f3a"></div>
<div class="chip" style="left:1051px;top:368.7px;width:103px;background:#e0e8fb"></div>
<div class="ct" style="left:1057.5px;width:80px;top:368.5px;color:#4a5a7a">HR Manager</div>
<div class="arr2" style="left:1144.8px;top:372.3px;border-top-color:#2a2f3a"></div>
<div class="t" style="left:1160.5px;width:80px;text-align:center;top:369.5px;font-size:8px;color:#111">9/2/2024</div>
<div class="t" style="left:-6.0px;width:80px;text-align:center;top:385.5px;font-size:8px;color:#111">REQ-006</div>
<div class="t" style="left:69.0px;width:80px;text-align:center;top:385.5px;font-size:8px;color:#111">2024-10-23</div>
<div class="chip" style="left:160.5px;top:384.7px;width:68.5px;background:#c8e1f8"></div>
<div class="ct" style="left:149.75px;width:80px;top:384.5px;color:#2f4f7a">Sales</div>
<div class="arr2" style="left:219.8px;top:388.3px;border-top-color:#2a2f3a"></div>
<div class="chip" style="left:243.5px;top:384.7px;width:112.5px;background:#e9e6dd"></div>
<div class="ct" style="left:254.75px;width:80px;top:384.5px;color:#6a6a6a">Amit</div>
<div class="arr2" style="left:346.8px;top:388.3px;border-top-color:#666"></div>
<div class="chip" style="left:371px;top:384.7px;width:82px;background:#dfe6fb"></div>
<div class="ct" style="left:367.0px;width:80px;top:384.5px;color:#4a5480">Stapler</div>
<div class="arr2" style="left:443.8px;top:388.3px;border-top-color:#2a2f3a"></div>
<div class="chip" style="left:467.5px;top:384.7px;width:65.0px;background:#f38d70"></div>
<div class="ct" style="left:455.0px;width:80px;top:384.5px;color:#6a2a1a">Stapler</div>
<div class="arr2" style="left:523.3px;top:388.3px;border-top-color:#2a2f3a"></div>
<div class="t" style="left:545.0px;width:80px;text-align:center;top:385.5px;font-size:8px;color:#111">1</div>
<div class="t" style="left:632.0px;width:80px;text-align:center;top:385.5px;font-size:8px;color:#111">31</div>
<div class="t" style="left:731.0px;width:80px;text-align:center;top:385.5px;font-size:8px;color:#111">31</div>
<div class="chip" style="left:834.5px;top:384.7px;width:99.0px;background:#d8e8c8"></div>
<div class="ct" style="left:839.0px;width:80px;top:384.5px;color:#3a5a2a">Low</div>
<div class="arr2" style="left:924.3px;top:388.3px;border-top-color:#2a2f3a"></div>
<div class="chip" style="left:948px;top:384.7px;width:88px;background:#d8cab9"></div>
<div class="ct" style="left:947.0px;width:80px;top:384.5px;color:#5a4a3a">Pending</div>
<div class="arr2" style="left:1026.8px;top:388.3px;border-top-color:#2a2f3a"></div>
<div class="chip" style="left:1051px;top:384.7px;width:103px;background:#e0e8fb"></div>
<div class="ct" style="left:1057.5px;width:80px;top:384.5px;color:#4a5a7a">HR Manager</div>
<div class="arr2" style="left:1144.8px;top:388.3px;border-top-color:#2a2f3a"></div>
<div class="t" style="left:1160.5px;width:80px;text-align:center;top:385.5px;font-size:8px;color:#111">10/30/2024</div>
<div class="t" style="left:-6.0px;width:80px;text-align:center;top:401.5px;font-size:8px;color:#111">REQ-007</div>
<div class="t" style="left:69.0px;width:80px;text-align:center;top:401.5px;font-size:8px;color:#111">2024-07-31</div>
<div class="chip" style="left:160.5px;top:400.7px;width:68.5px;background:#dde9f8"></div>
<div class="ct" style="left:149.75px;width:80px;top:400.5px;color:#3a4d6a">Finance</div>
<div class="arr2" style="left:219.8px;top:404.3px;border-top-color:#2a2f3a"></div>
<div class="chip" style="left:243.5px;top:400.7px;width:112.5px;background:#d9ccb9"></div>
<div class="ct" style="left:254.75px;width:80px;top:400.5px;color:#444">Anil</div>
<div class="arr2" style="left:346.8px;top:404.3px;border-top-color:#2a2f3a"></div>
<div class="chip" style="left:371px;top:400.7px;width:82px;background:#c9c9f5"></div>
<div class="ct" style="left:367.0px;width:80px;top:400.5px;color:#3a3a8a">Folder</div>
<div class="arr2" style="left:443.8px;top:404.3px;border-top-color:#2a2f3a"></div>
<div class="chip" style="left:467.5px;top:400.7px;width:65.0px;background:#f8c5bd"></div>
<div class="ct" style="left:455.0px;width:80px;top:400.5px;color:#6a2a2a">File Folder</div>
<div class="arr2" style="left:523.3px;top:404.3px;border-top-color:#2a2f3a"></div>
<div class="t" style="left:545.0px;width:80px;text-align:center;top:401.5px;font-size:8px;color:#111">1</div>
<div class="t" style="left:632.0px;width:80px;text-align:center;top:401.5px;font-size:8px;color:#111">23</div>
<div class="t" style="left:731.0px;width:80px;text-align:center;top:401.5px;font-size:8px;color:#111">23</div>
<div class="chip" style="left:834.5px;top:400.7px;width:99.0px;background:#dde9f8"></div>
<div class="ct" style="left:839.0px;width:80px;top:400.5px;color:#3a4a6a">Medium</div>
<div class="arr2" style="left:924.3px;top:404.3px;border-top-color:#2a2f3a"></div>
<div class="chip" style="left:948px;top:400.7px;width:88px;background:#d8dee6"></div>
<div class="ct" style="left:947.0px;width:80px;top:400.5px;color:#4a5a6a">Approved</div>
<div class="arr2" style="left:1026.8px;top:404.3px;border-top-color:#2a2f3a"></div>
<div class="chip" style="left:1051px;top:400.7px;width:103px;background:#cfe5f9"></div>
<div class="ct" style="left:1057.5px;width:80px;top:400.5px;color:#3a5a8a">Office Manager</div>
<div class="arr2" style="left:1144.8px;top:404.3px;border-top-color:#2a2f3a"></div>
<div class="t" style="left:1160.5px;width:80px;text-align:center;top:401.5px;font-size:8px;color:#111">8/7/2024</div>
<div class="t" style="left:-6.0px;width:80px;text-align:center;top:417.5px;font-size:8px;color:#111">REQ-008</div>
<div class="t" style="left:69.0px;width:80px;text-align:center;top:417.5px;font-size:8px;color:#111">2024-02-06</div>
<div class="chip" style="left:160.5px;top:416.7px;width:68.5px;background:#c8e1f8"></div>
<div class="ct" style="left:149.75px;width:80px;top:416.5px;color:#2f4f7a">Sales</div>
<div class="arr2" style="left:219.8px;top:420.3px;border-top-color:#2a2f3a"></div>
<div class="chip" style="left:243.5px;top:416.7px;width:112.5px;background:#b9a58b"></div>
<div class="ct" style="left:254.75px;width:80px;top:416.5px;color:#2a2a2a">Neha</div>
<div class="arr2" style="left:346.8px;top:420.3px;border-top-color:#2a2f3a"></div>
<div class="chip" style="left:371px;top:416.7px;width:82px;background:#cce6f9"></div>
<div class="ct" style="left:367.0px;width:80px;top:416.5px;color:#3a5a8a">Marker</div>
<div class="arr2" style="left:443.8px;top:420.3px;border-top-color:#2a2f3a"></div>
<div class="chip" style="left:467.5px;top:416.7px;width:65.0px;background:#ead6f4"></div>
<div class="ct" style="left:455.0px;width:80px;top:416.5px;color:#5a3a7a">Whiteboar...</div>
<div class="arr2" style="left:523.3px;top:420.3px;border-top-color:#2a2f3a"></div>
<div class="t" style="left:545.0px;width:80px;text-align:center;top:417.5px;font-size:8px;color:#111">6</div>
<div class="t" style="left:632.0px;width:80px;text-align:center;top:417.5px;font-size:8px;color:#111">35</div>
<div class="t" style="left:731.0px;width:80px;text-align:center;top:417.5px;font-size:8px;color:#111">210</div>
<div class="chip" style="left:834.5px;top:416.7px;width:99.0px;background:#d8e8c8"></div>
<div class="ct" style="left:839.0px;width:80px;top:416.5px;color:#3a5a2a">Low</div>
<div class="arr2" style="left:924.3px;top:420.3px;border-top-color:#2a2f3a"></div>
<div class="chip" style="left:948px;top:416.7px;width:88px;background:#a6bdd3"></div>
<div class="ct" style="left:947.0px;width:80px;top:416.5px;color:#2a3a4a">Requested</div>
<div class="arr2" style="left:1026.8px;top:420.3px;border-top-color:#2a2f3a"></div>
<div class="chip" style="left:1051px;top:416.7px;width:103px;background:#dccdf7"></div>
<div class="ct" style="left:1057.5px;width:80px;top:416.5px;color:#4a3a7a">Admin Head</div>
<div class="arr2" style="left:1144.8px;top:420.3px;border-top-color:#2a2f3a"></div>
<div class="t" style="left:1160.5px;width:80px;text-align:center;top:417.5px;font-size:8px;color:#111">2/13/2024</div>
<div class="t" style="left:-6.0px;width:80px;text-align:center;top:433.5px;font-size:8px;color:#111">REQ-009</div>
<div class="t" style="left:69.0px;width:80px;text-align:center;top:433.5px;font-size:8px;color:#111">2024-05-18</div>
<div class="chip" style="left:160.5px;top:432.7px;width:68.5px;background:#c8e1f8"></div>
<div class="ct" style="left:149.75px;width:80px;top:432.5px;color:#2f4f7a">Sales</div>
<div class="arr2" style="left:219.8px;top:436.3px;border-top-color:#2a2f3a"></div>
<div class="chip" style="left:243.5px;top:432.7px;width:112.5px;background:#d5dce5"></div>
<div class="ct" style="left:254.75px;width:80px;top:432.5px;color:#444">Kavita</div>
<div class="arr2" style="left:346.8px;top:436.3px;border-top-color:#2a2f3a"></div>
<div class="chip" style="left:371px;top:432.7px;width:82px;background:#cce6f9"></div>
<div class="ct" style="left:367.0px;width:80px;top:432.5px;color:#3a5a8a">Marker</div>
<div class="arr2" style="left:443.8px;top:436.3px;border-top-color:#2a2f3a"></div>
<div class="chip" style="left:467.5px;top:432.7px;width:65.0px;background:#ead6f4"></div>
<div class="ct" style="left:455.0px;width:80px;top:432.5px;color:#5a3a7a">Whiteboar...</div>
<div class="arr2" style="left:523.3px;top:436.3px;border-top-color:#2a2f3a"></div>
<div class="t" style="left:545.0px;width:80px;text-align:center;top:433.5px;font-size:8px;color:#111">2</div>
<div class="t" style="left:632.0px;width:80px;text-align:center;top:433.5px;font-size:8px;color:#111">21</div>
<div class="t" style="left:731.0px;width:80px;text-align:center;top:433.5px;font-size:8px;color:#111">42</div>
<div class="chip" style="left:834.5px;top:432.7px;width:99.0px;background:#dde9f8"></div>
<div class="ct" style="left:839.0px;width:80px;top:432.5px;color:#3a4a6a">Medium</div>
<div class="arr2" style="left:924.3px;top:436.3px;border-top-color:#2a2f3a"></div>
<div class="chip" style="left:948px;top:432.7px;width:88px;background:#d8cab9"></div>
<div class="ct" style="left:947.0px;width:80px;top:432.5px;color:#5a4a3a">Pending</div>
<div class="arr2" style="left:1026.8px;top:436.3px;border-top-color:#2a2f3a"></div>
<div class="chip" style="left:1051px;top:432.7px;width:103px;background:#cfe5f9"></div>
<div class="ct" style="left:1057.5px;width:80px;top:432.5px;color:#3a5a8a">Office Manager</div>
<div class="arr2" style="left:1144.8px;top:436.3px;border-top-color:#2a2f3a"></div>
<div class="t" style="left:1160.5px;width:80px;text-align:center;top:433.5px;font-size:8px;color:#111">5/21/2024</div>
<div class="t" style="left:-6.0px;width:80px;text-align:center;top:449.5px;font-size:8px;color:#111">REQ-010</div>
<div class="t" style="left:69.0px;width:80px;text-align:center;top:449.5px;font-size:8px;color:#111">2024-04-04</div>
<div class="chip" style="left:160.5px;top:448.7px;width:68.5px;background:#b6deb6"></div>
<div class="ct" style="left:149.75px;width:80px;top:448.5px;color:#2f5a30">Operations</div>
<div class="arr2" style="left:219.8px;top:452.3px;border-top-color:#2a2f3a"></div>
<div class="chip" style="left:243.5px;top:448.7px;width:112.5px;background:#a8c1d7"></div>
<div class="ct" style="left:254.75px;width:80px;top:448.5px;color:#2a3444">Meena</div>
<div class="arr2" style="left:346.8px;top:452.3px;border-top-color:#2a2f3a"></div>
<div class="chip" style="left:371px;top:448.7px;width:82px;background:#dfe6fb"></div>
<div class="ct" style="left:367.0px;width:80px;top:448.5px;color:#4a5480">Stapler</div>
<div class="arr2" style="left:443.8px;top:452.3px;border-top-color:#2a2f3a"></div>
<div class="chip" style="left:467.5px;top:448.7px;width:65.0px;background:#f38d70"></div>
<div class="ct" style="left:455.0px;width:80px;top:448.5px;color:#6a2a1a">Stapler</div>
<div class="arr2" style="left:523.3px;top:452.3px;border-top-color:#2a2f3a"></div>
<div class="t" style="left:545.0px;width:80px;text-align:center;top:449.5px;font-size:8px;color:#111">4</div>
<div class="t" style="left:632.0px;width:80px;text-align:center;top:449.5px;font-size:8px;color:#111">23</div>
<div class="t" style="left:731.0px;width:80px;text-align:center;top:449.5px;font-size:8px;color:#111">92</div>
<div class="chip" style="left:834.5px;top:448.7px;width:99.0px;background:#d5ece5"></div>
<div class="ct" style="left:839.0px;width:80px;top:448.5px;color:#2a5a4a">High</div>
<div class="arr2" style="left:924.3px;top:452.3px;border-top-color:#2a2f3a"></div>
<div class="chip" style="left:948px;top:448.7px;width:88px;background:#ebe7dd"></div>
<div class="ct" style="left:947.0px;width:80px;top:448.5px;color:#888">Issued</div>
<div class="arr2" style="left:1026.8px;top:452.3px;border-top-color:#666"></div>
<div class="chip" style="left:1051px;top:448.7px;width:103px;background:#cfe5f9"></div>
<div class="ct" style="left:1057.5px;width:80px;top:448.5px;color:#3a5a8a">Office Manager</div>
<div class="arr2" style="left:1144.8px;top:452.3px;border-top-color:#2a2f3a"></div>
<div class="t" style="left:1160.5px;width:80px;text-align:center;top:449.5px;font-size:8px;color:#111">4/14/2024</div>
<div class="t" style="left:-6.0px;width:80px;text-align:center;top:465.5px;font-size:8px;color:#111">REQ-011</div>
<div class="t" style="left:69.0px;width:80px;text-align:center;top:465.5px;font-size:8px;color:#111">2024-10-09</div>
<div class="chip" style="left:160.5px;top:464.7px;width:68.5px;background:#a9bddf"></div>
<div class="ct" style="left:149.75px;width:80px;top:464.5px;color:#1f2f6a">Admin</div>
<div class="arr2" style="left:219.8px;top:468.3px;border-top-color:#2a2f3a"></div>
<div class="chip" style="left:243.5px;top:464.7px;width:112.5px;background:#e9e6dd"></div>
<div class="ct" style="left:254.75px;width:80px;top:464.5px;color:#6a6a6a">Amit</div>
<div class="arr2" style="left:346.8px;top:468.3px;border-top-color:#666"></div>
<div class="chip" style="left:371px;top:464.7px;width:82px;background:#a9bff1"></div>
<div class="ct" style="left:367.0px;width:80px;top:464.5px;color:#2a3a7a">Paper</div>
<div class="arr2" style="left:443.8px;top:468.3px;border-top-color:#2a2f3a"></div>
<div class="chip" style="left:467.5px;top:464.7px;width:65.0px;background:#ddd6f6"></div>
<div class="ct" style="left:455.0px;width:80px;top:464.5px;color:#3a3a7a">A4 Paper</div>
<div class="arr2" style="left:523.3px;top:468.3px;border-top-color:#2a2f3a"></div>
<div class="t" style="left:545.0px;width:80px;text-align:center;top:465.5px;font-size:8px;color:#111">6</div>
<div class="t" style="left:632.0px;width:80px;text-align:center;top:465.5px;font-size:8px;color:#111">10</div>
<div class="t" style="left:731.0px;width:80px;text-align:center;top:465.5px;font-size:8px;color:#111">60</div>
<div class="chip" style="left:834.5px;top:464.7px;width:99.0px;background:#d8e8c8"></div>
<div class="ct" style="left:839.0px;width:80px;top:464.5px;color:#3a5a2a">Low</div>
<div class="arr2" style="left:924.3px;top:468.3px;border-top-color:#2a2f3a"></div>
<div class="chip" style="left:948px;top:464.7px;width:88px;background:#d8cab9"></div>
<div class="ct" style="left:947.0px;width:80px;top:464.5px;color:#5a4a3a">Pending</div>
<div class="arr2" style="left:1026.8px;top:468.3px;border-top-color:#2a2f3a"></div>
<div class="chip" style="left:1051px;top:464.7px;width:103px;background:#dccdf7"></div>
<div class="ct" style="left:1057.5px;width:80px;top:464.5px;color:#4a3a7a">Admin Head</div>
<div class="arr2" style="left:1144.8px;top:468.3px;border-top-color:#2a2f3a"></div>
<div class="t" style="left:1160.5px;width:80px;text-align:center;top:465.5px;font-size:8px;color:#111">10/15/2024</div>
<div class="t" style="left:-6.0px;width:80px;text-align:center;top:481.5px;font-size:8px;color:#111">REQ-012</div>
<div class="t" style="left:69.0px;width:80px;text-align:center;top:481.5px;font-size:8px;color:#111">2024-01-09</div>
<div class="chip" style="left:160.5px;top:480.7px;width:68.5px;background:#d9e9c6"></div>
<div class="ct" style="left:149.75px;width:80px;top:480.5px;color:#3d5a2a">HR</div>
<div class="arr2" style="left:219.8px;top:484.3px;border-top-color:#2a2f3a"></div>
<div class="chip" style="left:243.5px;top:480.7px;width:112.5px;background:#7c8a8c"></div>
<div class="ct" style="left:254.75px;width:80px;top:480.5px;color:#1a1a1a">Rohit</div>
<div class="arr2" style="left:346.8px;top:484.3px;border-top-color:#2a2f3a"></div>
<div class="chip" style="left:371px;top:480.7px;width:82px;background:#cce6f9"></div>
<div class="ct" style="left:367.0px;width:80px;top:480.5px;color:#3a5a8a">Marker</div>
<div class="arr2" style="left:443.8px;top:484.3px;border-top-color:#2a2f3a"></div>
<div class="chip" style="left:467.5px;top:480.7px;width:65.0px;background:#ead6f4"></div>
<div class="ct" style="left:455.0px;width:80px;top:480.5px;color:#5a3a7a">Whiteboar...</div>
<div class="arr2" style="left:523.3px;top:484.3px;border-top-color:#2a2f3a"></div>
<div class="t" style="left:545.0px;width:80px;text-align:center;top:481.5px;font-size:8px;color:#111">15</div>
<div class="t" style="left:632.0px;width:80px;text-align:center;top:481.5px;font-size:8px;color:#111">29</div>
<div class="t" style="left:731.0px;width:80px;text-align:center;top:481.5px;font-size:8px;color:#111">435</div>
<div class="chip" style="left:834.5px;top:480.7px;width:99.0px;background:#dde9f8"></div>
<div class="ct" style="left:839.0px;width:80px;top:480.5px;color:#3a4a6a">Medium</div>
<div class="arr2" style="left:924.3px;top:484.3px;border-top-color:#2a2f3a"></div>
<div class="chip" style="left:948px;top:480.7px;width:88px;background:#a6bdd3"></div>
<div class="ct" style="left:947.0px;width:80px;top:480.5px;color:#2a3a4a">Requested</div>
<div class="arr2" style="left:1026.8px;top:484.3px;border-top-color:#2a2f3a"></div>
<div class="chip" style="left:1051px;top:480.7px;width:103px;background:#e0e8fb"></div>
<div class="ct" style="left:1057.5px;width:80px;top:480.5px;color:#4a5a7a">HR Manager</div>
<div class="arr2" style="left:1144.8px;top:484.3px;border-top-color:#2a2f3a"></div>
<div class="t" style="left:1160.5px;width:80px;text-align:center;top:481.5px;font-size:8px;color:#111">1/10/2024</div>
<div class="t" style="left:-6.0px;width:80px;text-align:center;top:497.5px;font-size:8px;color:#111">REQ-013</div>
<div class="t" style="left:69.0px;width:80px;text-align:center;top:497.5px;font-size:8px;color:#111">2024-07-18</div>
<div class="chip" style="left:160.5px;top:496.7px;width:68.5px;background:#d6ede5"></div>
<div class="ct" style="left:149.75px;width:80px;top:496.5px;color:#2f4f48">IT</div>
<div class="arr2" style="left:219.8px;top:500.3px;border-top-color:#2a2f3a"></div>
<div class="chip" style="left:243.5px;top:496.7px;width:112.5px;background:#a8c1d7"></div>
<div class="ct" style="left:254.75px;width:80px;top:496.5px;color:#2a3444">Meena</div>
<div class="arr2" style="left:346.8px;top:500.3px;border-top-color:#2a2f3a"></div>
<div class="chip" style="left:371px;top:496.7px;width:82px;background:#dccff6"></div>
<div class="ct" style="left:367.0px;width:80px;top:496.5px;color:#4a3a7a">Pen</div>
<div class="arr2" style="left:443.8px;top:500.3px;border-top-color:#2a2f3a"></div>
<div class="chip" style="left:467.5px;top:496.7px;width:65.0px;background:#fbd9cf"></div>
<div class="ct" style="left:455.0px;width:80px;top:496.5px;color:#7a3a30">Ball Pen</div>
<div class="arr2" style="left:523.3px;top:500.3px;border-top-color:#2a2f3a"></div>
<div class="t" style="left:545.0px;width:80px;text-align:center;top:497.5px;font-size:8px;color:#111">11</div>
<div class="t" style="left:632.0px;width:80px;text-align:center;top:497.5px;font-size:8px;color:#111">23</div>
<div class="t" style="left:731.0px;width:80px;text-align:center;top:497.5px;font-size:8px;color:#111">253</div>
<div class="chip" style="left:834.5px;top:496.7px;width:99.0px;background:#d5ece5"></div>
<div class="ct" style="left:839.0px;width:80px;top:496.5px;color:#2a5a4a">High</div>
<div class="arr2" style="left:924.3px;top:500.3px;border-top-color:#2a2f3a"></div>
<div class="chip" style="left:948px;top:496.7px;width:88px;background:#d8cab9"></div>
<div class="ct" style="left:947.0px;width:80px;top:496.5px;color:#5a4a3a">Pending</div>
<div class="arr2" style="left:1026.8px;top:500.3px;border-top-color:#2a2f3a"></div>
<div class="chip" style="left:1051px;top:496.7px;width:103px;background:#cfe5f9"></div>
<div class="ct" style="left:1057.5px;width:80px;top:496.5px;color:#3a5a8a">Office Manager</div>
<div class="arr2" style="left:1144.8px;top:500.3px;border-top-color:#2a2f3a"></div>
<div class="t" style="left:1160.5px;width:80px;text-align:center;top:497.5px;font-size:8px;color:#111">7/24/2024</div>
<div class="t" style="left:-6.0px;width:80px;text-align:center;top:513.5px;font-size:8px;color:#111">REQ-014</div>
<div class="t" style="left:69.0px;width:80px;text-align:center;top:513.5px;font-size:8px;color:#111">2024-06-22</div>
<div class="chip" style="left:160.5px;top:512.7px;width:68.5px;background:#b6deb6"></div>
<div class="ct" style="left:149.75px;width:80px;top:512.5px;color:#2f5a30">Operations</div>
<div class="arr2" style="left:219.8px;top:516.3px;border-top-color:#2a2f3a"></div>
<div class="chip" style="left:243.5px;top:512.7px;width:112.5px;background:#e9e6dd"></div>
<div class="ct" style="left:254.75px;width:80px;top:512.5px;color:#6a6a6a">Amit</div>
<div class="arr2" style="left:346.8px;top:516.3px;border-top-color:#666"></div>
<div class="chip" style="left:371px;top:512.7px;width:82px;background:#a9bff1"></div>
<div class="ct" style="left:367.0px;width:80px;top:512.5px;color:#2a3a7a">Paper</div>
<div class="arr2" style="left:443.8px;top:516.3px;border-top-color:#2a2f3a"></div>
<div class="chip" style="left:467.5px;top:512.7px;width:65.0px;background:#ddd6f6"></div>
<div class="ct" style="left:455.0px;width:80px;top:512.5px;color:#3a3a7a">A4 Paper</div>
<div class="arr2" style="left:523.3px;top:516.3px;border-top-color:#2a2f3a"></div>
<div class="t" style="left:545.0px;width:80px;text-align:center;top:513.5px;font-size:8px;color:#111">7</div>
<div class="t" style="left:632.0px;width:80px;text-align:center;top:513.5px;font-size:8px;color:#111">43</div>
<div class="t" style="left:731.0px;width:80px;text-align:center;top:513.5px;font-size:8px;color:#111">301</div>
<div class="chip" style="left:834.5px;top:512.7px;width:99.0px;background:#d5ece5"></div>
<div class="ct" style="left:839.0px;width:80px;top:512.5px;color:#2a5a4a">High</div>
<div class="arr2" style="left:924.3px;top:516.3px;border-top-color:#2a2f3a"></div>
<div class="chip" style="left:948px;top:512.7px;width:88px;background:#d8cab9"></div>
<div class="ct" style="left:947.0px;width:80px;top:512.5px;color:#5a4a3a">Pending</div>
<div class="arr2" style="left:1026.8px;top:516.3px;border-top-color:#2a2f3a"></div>
<div class="chip" style="left:1051px;top:512.7px;width:103px;background:#e0e8fb"></div>
<div class="ct" style="left:1057.5px;width:80px;top:512.5px;color:#4a5a7a">HR Manager</div>
<div class="arr2" style="left:1144.8px;top:516.3px;border-top-color:#2a2f3a"></div>
<div class="t" style="left:1160.5px;width:80px;text-align:center;top:513.5px;font-size:8px;color:#111">6/29/2024</div>
<div class="t" style="left:-6.0px;width:80px;text-align:center;top:529.5px;font-size:8px;color:#111">REQ-015</div>
<div class="t" style="left:69.0px;width:80px;text-align:center;top:529.5px;font-size:8px;color:#111">2024-09-21</div>
<div class="chip" style="left:160.5px;top:528.7px;width:68.5px;background:#dde9f8"></div>
<div class="ct" style="left:149.75px;width:80px;top:528.5px;color:#3a4d6a">Finance</div>
<div class="arr2" style="left:219.8px;top:532.3px;border-top-color:#2a2f3a"></div>
<div class="chip" style="left:243.5px;top:528.7px;width:112.5px;background:#a8c1d7"></div>
<div class="ct" style="left:254.75px;width:80px;top:528.5px;color:#2a3444">Meena</div>
<div class="arr2" style="left:346.8px;top:532.3px;border-top-color:#2a2f3a"></div>
<div class="chip" style="left:371px;top:528.7px;width:82px;background:#dfe6fb"></div>
<div class="ct" style="left:367.0px;width:80px;top:528.5px;color:#4a5480">Stapler</div>
<div class="arr2" style="left:443.8px;top:532.3px;border-top-color:#2a2f3a"></div>
<div class="chip" style="left:467.5px;top:528.7px;width:65.0px;background:#f38d70"></div>
<div class="ct" style="left:455.0px;width:80px;top:528.5px;color:#6a2a1a">Stapler</div>
<div class="arr2" style="left:523.3px;top:532.3px;border-top-color:#2a2f3a"></div>
<div class="t" style="left:545.0px;width:80px;text-align:center;top:529.5px;font-size:8px;color:#111">14</div>
<div class="t" style="left:632.0px;width:80px;text-align:center;top:529.5px;font-size:8px;color:#111">35</div>
<div class="t" style="left:731.0px;width:80px;text-align:center;top:529.5px;font-size:8px;color:#111">490</div>
<div class="chip" style="left:834.5px;top:528.7px;width:99.0px;background:#dde9f8"></div>
<div class="ct" style="left:839.0px;width:80px;top:528.5px;color:#3a4a6a">Medium</div>
<div class="arr2" style="left:924.3px;top:532.3px;border-top-color:#2a2f3a"></div>
<div class="chip" style="left:948px;top:528.7px;width:88px;background:#d8dee6"></div>
<div class="ct" style="left:947.0px;width:80px;top:528.5px;color:#4a5a6a">Approved</div>
<div class="arr2" style="left:1026.8px;top:532.3px;border-top-color:#2a2f3a"></div>
<div class="chip" style="left:1051px;top:528.7px;width:103px;background:#cfe5f9"></div>
<div class="ct" style="left:1057.5px;width:80px;top:528.5px;color:#3a5a8a">Office Manager</div>
<div class="arr2" style="left:1144.8px;top:532.3px;border-top-color:#2a2f3a"></div>
<div class="t" style="left:1160.5px;width:80px;text-align:center;top:529.5px;font-size:8px;color:#111">9/23/2024</div>
<div class="t" style="left:-6.0px;width:80px;text-align:center;top:545.5px;font-size:8px;color:#111">REQ-016</div>
<div class="t" style="left:69.0px;width:80px;text-align:center;top:545.5px;font-size:8px;color:#111">2024-05-12</div>
<div class="chip" style="left:160.5px;top:544.7px;width:68.5px;background:#dde9f8"></div>
<div class="ct" style="left:149.75px;width:80px;top:544.5px;color:#3a4d6a">Finance</div>
<div class="arr2" style="left:219.8px;top:548.3px;border-top-color:#2a2f3a"></div>
<div class="chip" style="left:243.5px;top:544.7px;width:112.5px;background:#b8a184"></div>
<div class="ct" style="left:254.75px;width:80px;top:544.5px;color:#2a2a2a">Suresh</div>
<div class="arr2" style="left:346.8px;top:548.3px;border-top-color:#2a2f3a"></div>
<div class="chip" style="left:371px;top:544.7px;width:82px;background:#dfe6fb"></div>
<div class="ct" style="left:367.0px;width:80px;top:544.5px;color:#4a5480">Stapler</div>
<div class="arr2" style="left:443.8px;top:548.3px;border-top-color:#2a2f3a"></div>
<div class="chip" style="left:467.5px;top:544.7px;width:65.0px;background:#f38d70"></div>
<div class="ct" style="left:455.0px;width:80px;top:544.5px;color:#6a2a1a">Stapler</div>
<div class="arr2" style="left:523.3px;top:548.3px;border-top-color:#2a2f3a"></div>
<div class="t" style="left:545.0px;width:80px;text-align:center;top:545.5px;font-size:8px;color:#111">1</div>
<div class="t" style="left:632.0px;width:80px;text-align:center;top:545.5px;font-size:8px;color:#111">14</div>
<div class="t" style="left:731.0px;width:80px;text-align:center;top:545.5px;font-size:8px;color:#111">14</div>
<div class="chip" style="left:834.5px;top:544.7px;width:99.0px;background:#dde9f8"></div>
<div class="ct" style="left:839.0px;width:80px;top:544.5px;color:#3a4a6a">Medium</div>
<div class="arr2" style="left:924.3px;top:548.3px;border-top-color:#2a2f3a"></div>
<div class="chip" style="left:948px;top:544.7px;width:88px;background:#d8dee6"></div>
<div class="ct" style="left:947.0px;width:80px;top:544.5px;color:#4a5a6a">Approved</div>
<div class="arr2" style="left:1026.8px;top:548.3px;border-top-color:#2a2f3a"></div>
<div class="chip" style="left:1051px;top:544.7px;width:103px;background:#cfe5f9"></div>
<div class="ct" style="left:1057.5px;width:80px;top:544.5px;color:#3a5a8a">Office Manager</div>
<div class="arr2" style="left:1144.8px;top:548.3px;border-top-color:#2a2f3a"></div>
<div class="t" style="left:1160.5px;width:80px;text-align:center;top:545.5px;font-size:8px;color:#111">5/15/2024</div>
<div class="t" style="left:-6.0px;width:80px;text-align:center;top:561.5px;font-size:8px;color:#111">REQ-017</div>
<div class="t" style="left:69.0px;width:80px;text-align:center;top:561.5px;font-size:8px;color:#111">2024-09-20</div>
<div class="chip" style="left:160.5px;top:560.7px;width:68.5px;background:#dde9f8"></div>
<div class="ct" style="left:149.75px;width:80px;top:560.5px;color:#3a4d6a">Finance</div>
<div class="arr2" style="left:219.8px;top:564.3px;border-top-color:#2a2f3a"></div>
<div class="chip" style="left:243.5px;top:560.7px;width:112.5px;background:#7c8a8c"></div>
<div class="ct" style="left:254.75px;width:80px;top:560.5px;color:#1a1a1a">Rohit</div>
<div class="arr2" style="left:346.8px;top:564.3px;border-top-color:#2a2f3a"></div>
<div class="chip" style="left:371px;top:560.7px;width:82px;background:#dccff6"></div>
<div class="ct" style="left:367.0px;width:80px;top:560.5px;color:#4a3a7a">Pen</div>
<div class="arr2" style="left:443.8px;top:564.3px;border-top-color:#2a2f3a"></div>
<div class="chip" style="left:467.5px;top:560.7px;width:65.0px;background:#fbd9cf"></div>
<div class="ct" style="left:455.0px;width:80px;top:560.5px;color:#7a3a30">Ball Pen</div>
<div class="arr2" style="left:523.3px;top:564.3px;border-top-color:#2a2f3a"></div>
<div class="t" style="left:545.0px;width:80px;text-align:center;top:561.5px;font-size:8px;color:#111">3</div>
<div class="t" style="left:632.0px;width:80px;text-align:center;top:561.5px;font-size:8px;color:#111">48</div>
<div class="t" style="left:731.0px;width:80px;text-align:center;top:561.5px;font-size:8px;color:#111">144</div>
<div class="chip" style="left:834.5px;top:560.7px;width:99.0px;background:#d8e8c8"></div>
<div class="ct" style="left:839.0px;width:80px;top:560.5px;color:#3a5a2a">Low</div>
<div class="arr2" style="left:924.3px;top:564.3px;border-top-color:#2a2f3a"></div>
<div class="chip" style="left:948px;top:560.7px;width:88px;background:#a6bdd3"></div>
<div class="ct" style="left:947.0px;width:80px;top:560.5px;color:#2a3a4a">Requested</div>
<div class="arr2" style="left:1026.8px;top:564.3px;border-top-color:#2a2f3a"></div>
<div class="chip" style="left:1051px;top:560.7px;width:103px;background:#cfe5f9"></div>
<div class="ct" style="left:1057.5px;width:80px;top:560.5px;color:#3a5a8a">Office Manager</div>
<div class="arr2" style="left:1144.8px;top:564.3px;border-top-color:#2a2f3a"></div>
<div class="t" style="left:1160.5px;width:80px;text-align:center;top:561.5px;font-size:8px;color:#111">9/22/2024</div>
<div class="ab" style="left:0;top:570px;width:1210px;height:6px;background:#f1f1f1"></div>
<div class="ab" style="left:1px;top:570px;width:1141px;height:6px;background:#dadada;border-radius:3px"></div>
</body></html>
